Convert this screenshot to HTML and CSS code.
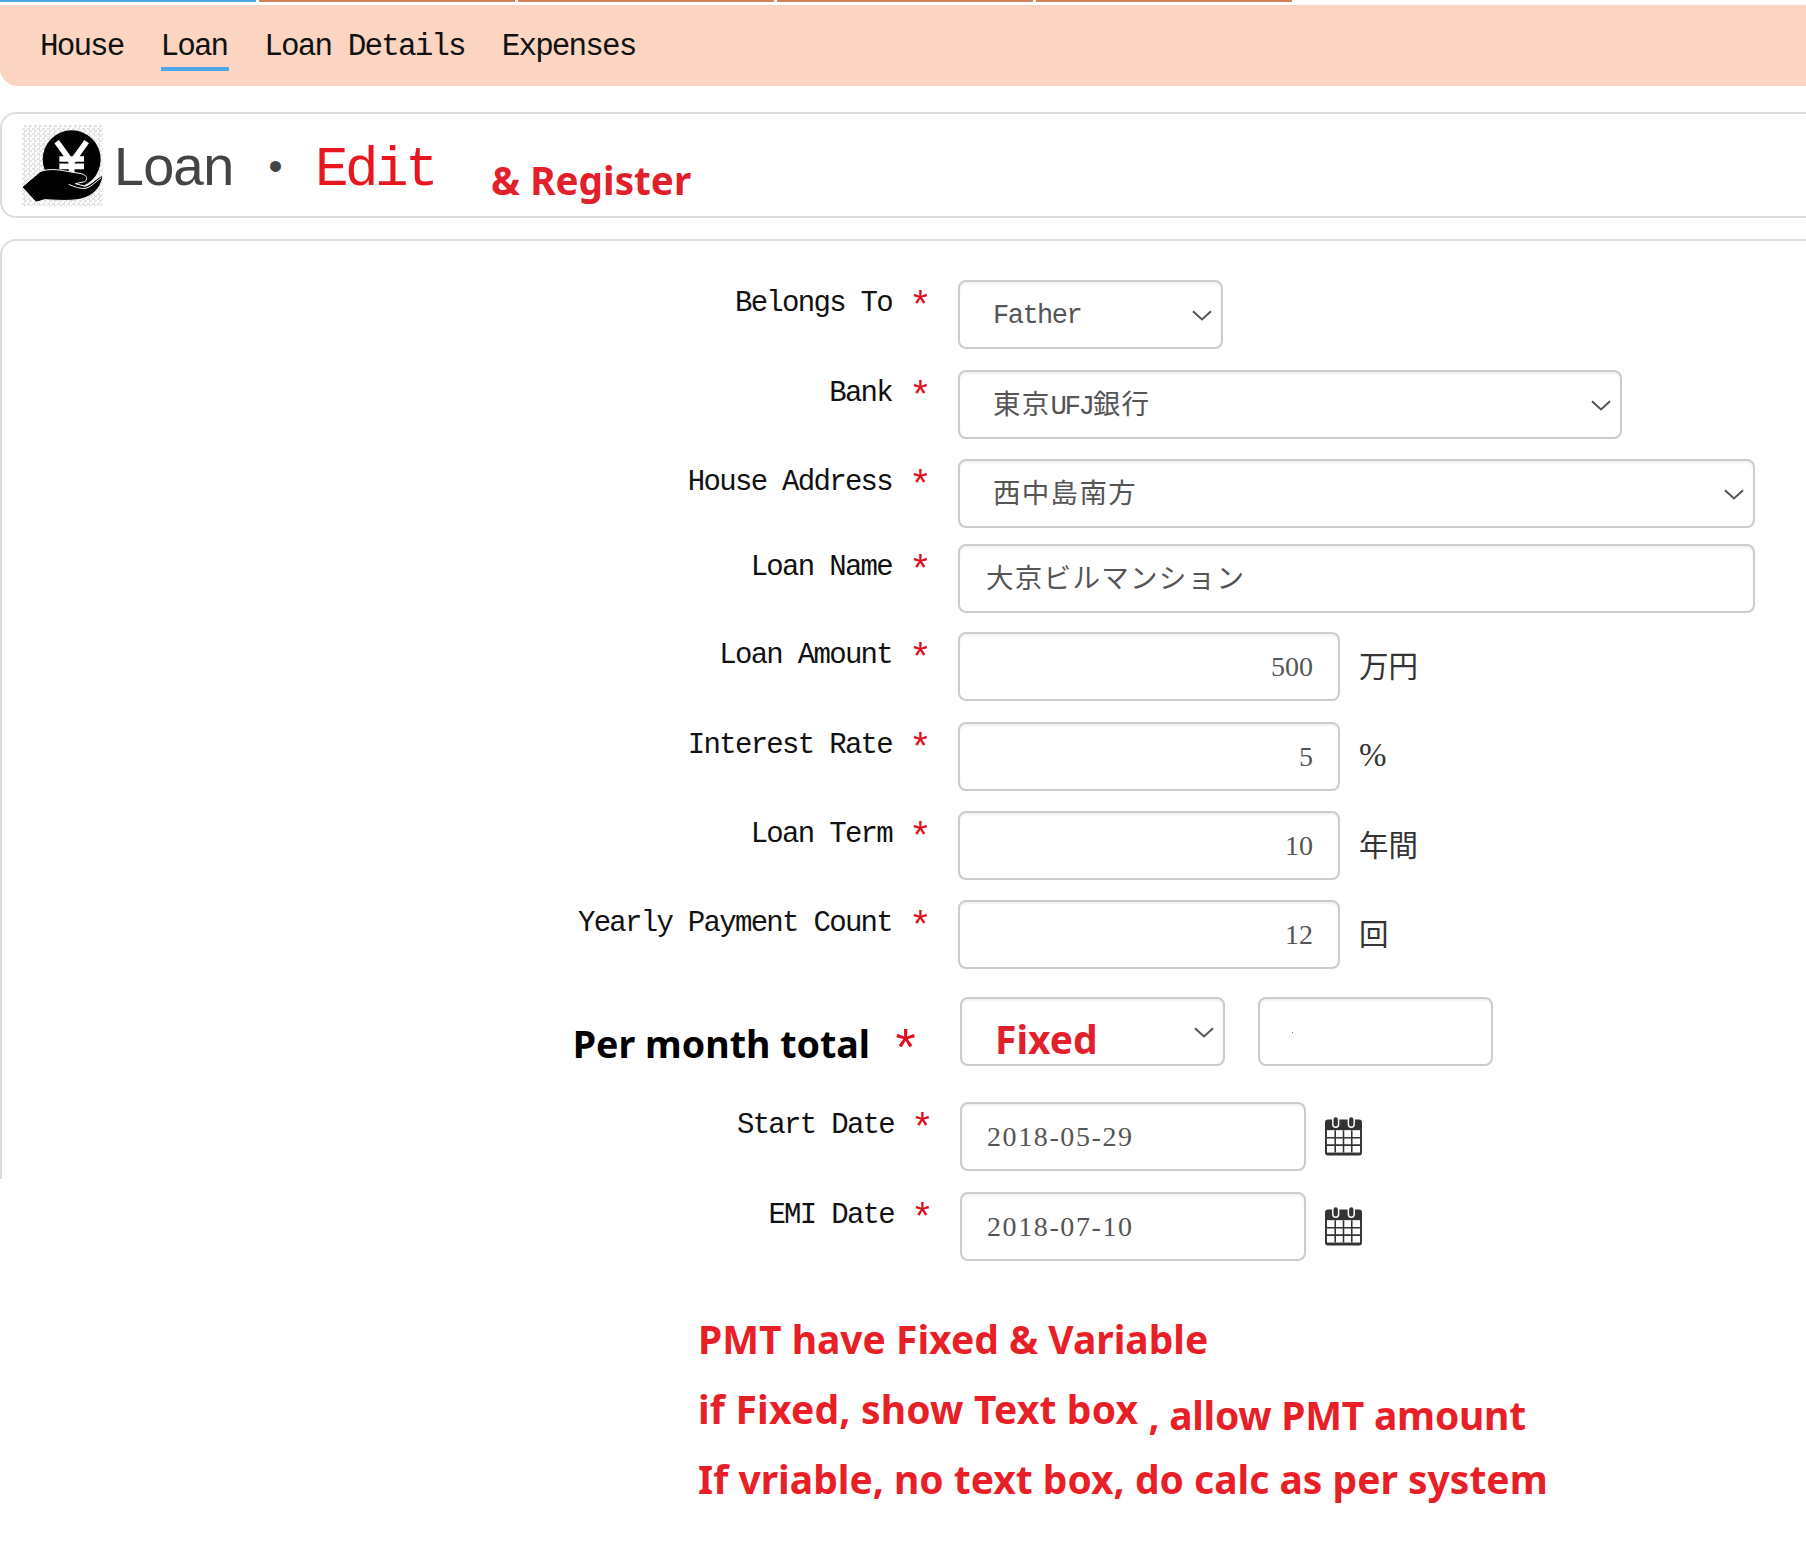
FILE: index.html
```html
<!DOCTYPE html>
<html lang="ja">
<head>
<meta charset="utf-8">
<title>Loan Edit</title>
<link rel="stylesheet" href="styles.css">
</head>
<body>
<svg class="defs" width="0" height="0" aria-hidden="true">
  <symbol id="chev" viewBox="0 0 20 11"><path d="M1 1.2 L10 9.5 L19 1.2" fill="none" stroke="#555" stroke-width="2"/></symbol>
  <symbol id="cal" viewBox="0 0 38 42">
    <rect x="0" y="4" width="38" height="37" rx="3" fill="#333"/>
    <rect x="8" y="1" width="6" height="11" rx="3" fill="#333" stroke="#fff" stroke-width="1.5"/>
    <rect x="24" y="1" width="6" height="11" rx="3" fill="#333" stroke="#fff" stroke-width="1.5"/>
    <rect x="2" y="15" width="34" height="23" fill="#fff"/>
    <path d="M10.5 15V38M19 15V38M27.5 15V38M2 22.7H36M2 30.4H36" stroke="#333" stroke-width="1.6"/>
  </symbol>
</svg>

<div class="tabs"><i class="strip strip-on"></i><i class="strip"></i><i class="strip"></i><i class="strip"></i><i class="strip"></i></div>

<nav class="nav">
  <a class="nav-item">House</a>
  <a class="nav-item nav-item-on">Loan</a>
  <a class="nav-item">Loan Details</a>
  <a class="nav-item">Expenses</a>
</nav>

<header class="title">
  <div class="logo">
    <svg viewBox="0 0 243 243" width="81" height="81">
      <circle cx="149" cy="103" r="87" fill="#000"/>
      <path d="M104 50 L149 112 L194 50 M149 112 V150 M112 102 H186 M112 124 H186" fill="none" stroke="#fff" stroke-width="17"/>
      <path d="M0 186 L54 140 C80 130 110 134 130 138 L178 146 C196 150 198 164 188 170 L160 176 L190 184 C212 176 226 156 243 150 C240 180 222 206 190 218 C160 230 110 226 68 224 L42 232 Z" fill="#000" stroke="#fff" stroke-width="3"/>
      <path d="M140 178 C158 186 176 192 192 190 C212 184 224 166 238 158" fill="none" stroke="#fff" stroke-width="3"/>
    </svg>
  </div>
  <h1 class="heading">Loan<span class="heading-dot">•</span><span class="heading-edit">Edit</span></h1>
  <span class="heading-note">&amp; Register</span>
</header>

<main class="form">
  <div class="row gap-21">
    <div class="label">Belongs To</div><div class="req">*</div>
    <div class="field field-sel w-265"><span class="val">Father</span><svg class="chev"><use href="#chev"/></svg></div>
  </div>
  <div class="row">
    <div class="label">Bank</div><div class="req">*</div>
    <div class="field field-sel w-664"><span class="val val-cjk">東京<span class="val-latin">UFJ</span>銀行</span><svg class="chev"><use href="#chev"/></svg></div>
  </div>
  <div class="row gap-16">
    <div class="label">House Address</div><div class="req">*</div>
    <div class="field field-sel w-797"><span class="val val-cjk">西中島南方</span><svg class="chev"><use href="#chev"/></svg></div>
  </div>
  <div class="row gap-19">
    <div class="label">Loan Name</div><div class="req">*</div>
    <div class="field field-text w-797"><span class="val val-cjk">大京ビルマンション</span></div>
  </div>
  <div class="row gap-21">
    <div class="label">Loan Amount</div><div class="req">*</div>
    <div class="field field-num w-382"><span class="val">500</span></div><span class="unit">万円</span>
  </div>
  <div class="row">
    <div class="label">Interest Rate</div><div class="req">*</div>
    <div class="field field-num w-382"><span class="val">5</span></div><span class="unit unit-pct">%</span>
  </div>
  <div class="row">
    <div class="label">Loan Term</div><div class="req">*</div>
    <div class="field field-num w-382"><span class="val">10</span></div><span class="unit">年間</span>
  </div>
  <div class="row gap-28">
    <div class="label">Yearly Payment Count</div><div class="req">*</div>
    <div class="field field-num w-382"><span class="val">12</span></div><span class="unit">回</span>
  </div>
  <div class="row row-shift gap-36">
    <div class="label label-big">Per month total</div><div class="req req-big">*</div>
    <div class="field field-sel w-265"><span class="val val-fixed">Fixed</span><svg class="chev"><use href="#chev"/></svg></div>
    <div class="field field-blank w-235"><i class="speck"></i></div>
  </div>
  <div class="row row-shift gap-21">
    <div class="label">Start Date</div><div class="req">*</div>
    <div class="field field-date w-346"><span class="val">2018-05-29</span></div>
    <svg class="cal"><use href="#cal"/></svg>
  </div>
  <div class="row row-shift">
    <div class="label">EMI Date</div><div class="req">*</div>
    <div class="field field-date w-346"><span class="val">2018-07-10</span></div>
    <svg class="cal"><use href="#cal"/></svg>
  </div>

  <section class="notes">
    <p class="note">PMT have Fixed &amp; Variable</p>
    <p class="note"><span class="note-head">if Fixed, show Text box</span> <span class="note-tail">, allow PMT amount</span></p>
    <p class="note">If vriable, no text box, do calc as per system</p>
  </section>
</main>
</body>
</html>
```
FILE: styles.css
```css
* { box-sizing: border-box; }
html, body { margin: 0; padding: 0; background: #fff; overflow-x: hidden; }
body {
  width: 1806px;
  height: 1562px;
  overflow: hidden;
  font-family: "Liberation Mono", "Noto Sans CJK JP", monospace;
  color: #111;
}
.defs { position: absolute; }

.tabs { display: flex; gap: 3px; height: 5px; align-items: flex-start; }
.strip { width: 256px; height: 2px; background: #d0835a; }
.strip-on { background: #4da6e5; }

.nav {
  display: flex;
  gap: 35px;
  height: 81px;
  padding-left: 40px;
  background: #fbd5c2;
  border-bottom-left-radius: 18px;
}
.nav-item {
  height: 66px;
  padding: 28px 2px 0 0;
  font-size: 31px;
  letter-spacing: -1.9px;
  line-height: 28px;
  color: #111;
}
.nav-item-on { border-bottom: 4px solid #4da6e5; }

.title {
  display: flex;
  align-items: flex-start;
  height: 106px;
  margin-top: 26px;
  margin-right: -20px;
  padding: 11px 0 0 20px;
  border: 2px solid #ddd;
  border-right: 0;
  border-radius: 16px 0 0 16px;
}
.logo {
  width: 81px;
  height: 81px;
  background: repeating-conic-gradient(#e4e4e4 0 25%, #fff 0 50%) 0 0 / 5px 5px;
}
.logo svg { display: block; }
.heading {
  display: flex;
  margin: 0 0 0 9px;
  padding-top: 17px;
  font-size: 56px;
  letter-spacing: -3.6px;
  line-height: 56px;
  font-weight: 400;
  color: #444;
}
.heading-dot { width: 83px; padding-left: 4px; text-align: center; font-size: 40px; letter-spacing: 0; }
.heading-edit { color: #e8171f; }
.heading-note {
  margin: 31px 0 0 56px;
  font: 700 38.7px/48px "Noto Sans", sans-serif;
  color: #e2202c;
}

.form { position: relative; margin-top: 21px; padding-top: 41px; }
.form::before {
  content: "";
  position: absolute;
  inset: 0 -20px auto 0;
  height: 938px;
  border: 2px solid #ddd;
  border-width: 2px 0 0 2px;
  border-radius: 16px 0 0 0;
  pointer-events: none;
}
.row { position: relative; display: flex; height: 69px; margin-bottom: 20px; }
.gap-21 { margin-bottom: 21px; }
.gap-16 { margin-bottom: 16px; }
.gap-19 { margin-bottom: 19px; }
.gap-28 { margin-bottom: 28px; }
.gap-36 { margin-bottom: 36px; }
.row-shift { padding-left: 2px; }

.label {
  width: 892px;
  padding-top: 9px;
  text-align: right;
  white-space: nowrap;
  font-size: 29px;
  letter-spacing: -1.7px;
  line-height: 30px;
  color: #111;
}
.req {
  width: 66px;
  padding: 13px 0 0 17px;
  font-size: 38px;
  line-height: 30px;
  color: #e0101c;
}
.label-big {
  width: 868px;
  padding-top: 23px;
  font: 700 37.6px/48px "Noto Sans", sans-serif;
  letter-spacing: 0;
  color: #000;
}
.req-big {
  width: 90px;
  padding: 37px 0 0 20px;
  font-size: 52px;
  line-height: 40px;
}

.field {
  display: flex;
  align-items: center;
  height: 69px;
  flex: none;
  background: #fff;
  border: 2px solid #ccc;
  border-radius: 8px;
  box-shadow: inset 0 2px 2px rgba(0, 0, 0, .06);
  color: #555;
  font-size: 27px;
  letter-spacing: -1.5px;
}
.w-265 { width: 265px; }
.w-664 { width: 664px; }
.w-797 { width: 797px; }
.w-382 { width: 382px; }
.w-346 { width: 346px; }
.w-235 { width: 235px; margin-left: 33px; }

.field-sel { justify-content: space-between; padding: 2px 9px 0 33px; }
.field-text { padding-left: 26px; }
.field-num {
  justify-content: flex-end;
  padding: 0 25px 0 0;
  font: 28px "Liberation Serif", serif;
  letter-spacing: 0;
}
.field-date {
  padding: 0 0 0 25px;
  font: 28px "Liberation Serif", serif;
  letter-spacing: 1.6px;
}
.field-blank { padding-left: 32px; }
.val { white-space: nowrap; }
.val-cjk { padding-bottom: 7px; font-size: 27.5px; letter-spacing: 1.3px; }
.val-latin { letter-spacing: -2.5px; }
.field-text .val-cjk { padding-bottom: 5px; }
.val-fixed {
  font: 700 39px/48px "Noto Sans", sans-serif;
  letter-spacing: 0;
  color: #e2202c;
  margin-top: 12px;
}
.speck { width: 1px; height: 1px; margin-top: 2px; background: #777; }
.chev { width: 20px; height: 11px; flex: none; }
.unit {
  padding: 19px 0 0 19px;
  font-size: 29.5px;
  letter-spacing: 0;
  line-height: 36px;
  color: #333;
}
.unit-pct { padding-top: 15px; font-family: "Liberation Serif", serif; font-size: 33px; }
.cal { width: 37px; height: 42px; margin: 13px 0 0 19px; flex: none; }

.notes { margin-top: 43px; padding-left: 698px; }
.note {
  margin: 0;
  height: 70px;
  font: 700 39px/70px "Noto Sans", sans-serif;
  color: #e81f27;
  white-space: nowrap;
}
.note-head { letter-spacing: .2px; }
.note-tail { position: relative; top: 6px; letter-spacing: -.25px; }
```
